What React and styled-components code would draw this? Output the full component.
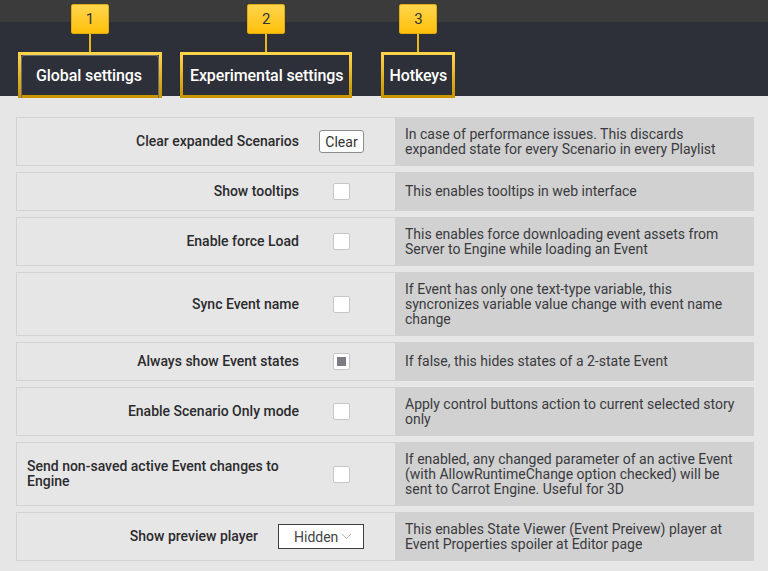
import React from "react";
import styled, { createGlobalStyle } from "styled-components";

const GlobalStyle = createGlobalStyle`
  html, body {
    margin: 0;
    padding: 0;
    background: #e6e6e6;
    font-family: Roboto, "Liberation Sans", Arial, sans-serif;
  }
`;

const TopStrip = styled.div`
  height: 22px;
  background: #3b3b3c;
`;

const Nav = styled.nav`
  height: 74px;
  background: #2e3039;
  display: flex;
  align-items: flex-end;
  padding-left: 18px;
`;

const Tab = styled.div`
  position: relative;
  box-sizing: border-box;
  height: 46px;
  margin-left: ${({ $gap }) => $gap || 0}px;
  margin-bottom: -2px;
  padding: 0 ${({ $pr }) => $pr}px 0 ${({ $pl }) => $pl}px;
  display: flex;
  align-items: center;
  border: 3px solid #e8b416;
  border-image: linear-gradient(#ffd44a, #c99600) 1;
  color: #ffffff;
  font-size: 16px;
  font-weight: 500;
  letter-spacing: -0.1px;
  white-space: nowrap;
`;

const ActiveFrame = styled.div`
  position: absolute;
  inset: 0 0 -3px 0;
  border: 1px solid #6c6e77;
  border-bottom: none;
  border-radius: 3px 3px 0 0;
`;

const Callout = styled.div`
  position: absolute;
  left: 50%;
  bottom: 100%;
  transform: translateX(-50%);
  display: flex;
  flex-direction: column;
  align-items: center;
  margin-bottom: 3px;
`;

const CalloutBox = styled.div`
  width: 38px;
  height: 30px;
  box-sizing: border-box;
  border-radius: 2px;
  background: linear-gradient(#ffd54d, #ffc00a);
  border: 1px solid #e2ac10;
  color: #333;
  font-size: 15px;
  font-weight: 400;
  display: flex;
  align-items: center;
  justify-content: center;
`;

const CalloutStem = styled.div`
  width: 2px;
  height: 18px;
  background: #e9b820;
`;

const Main = styled.main`
  padding: 21px 14px 10px 16px;
  display: flex;
  flex-direction: column;
  gap: 6px;
`;

const Row = styled.div`
  display: flex;
  min-height: 39px;
`;

const LeftCell = styled.div`
  flex: 1;
  display: flex;
  align-items: center;
  border: 1px solid #d3d3d3;
  border-right: none;
  background: #e6e6e6;
`;

const Label = styled.div`
  flex: 1;
  padding-left: 10px;
  text-align: ${({ $left }) => ($left ? "left" : "right")};
  font-size: 14px;
  font-weight: 500;
  line-height: 15px;
  color: #2b2b2e;
`;

const Control = styled.div`
  min-width: 45px;
  margin: 0 31px 0 20px;
  display: flex;
  justify-content: center;
  align-items: center;
`;

const Description = styled.div`
  width: 359px;
  box-sizing: border-box;
  padding: 9.5px 12px 9.5px 10px;
  display: flex;
  align-items: center;
  background: #d1d1d1;
  font-size: 14px;
  line-height: 15px;
  color: #3a3a3e;
`;

const Checkbox = styled.div`
  width: 17px;
  height: 17px;
  box-sizing: border-box;
  background: #fff;
  border: 1px solid #c6c6c6;
  border-radius: 2px;
  padding: 3px;
`;

const CheckMark = styled.div`
  width: 100%;
  height: 100%;
  background: #7c7c84;
`;

const Button = styled.button`
  width: 45px;
  height: 23px;
  box-sizing: border-box;
  background: #fff;
  border: 1px solid #8d8d8d;
  border-radius: 3px;
  font-family: inherit;
  font-size: 14px;
  color: #333;
  padding: 0;
`;

const Select = styled.div`
  width: 86px;
  height: 25px;
  box-sizing: border-box;
  border: 1px solid #3d3d42;
  background: #fff;
  display: flex;
  align-items: center;
  padding-left: 15px;
  gap: 3px;
  font-size: 14px;
  color: #444;
`;

const Chevron = () => (
  <svg width="11" height="7" viewBox="0 0 11 7">
    <path d="M1 1l4.5 4.5L10 1" fill="none" stroke="#b3b3b3" strokeWidth="1" />
  </svg>
);

const tabs = [
  { id: 1, title: "Global settings", pl: 15, pr: 17, gap: 0, active: true },
  { id: 2, title: "Experimental settings", pl: 7, pr: 6, gap: 18 },
  { id: 3, title: "Hotkeys", pl: 5, pr: 5, gap: 29 },
];

const settings = [
  {
    label: "Clear expanded Scenarios",
    control: <Button>Clear</Button>,
    text: "In case of performance issues. This discards expanded state for every Scenario in every Playlist",
  },
  { label: "Show tooltips", control: "box", text: "This enables tooltips in web interface" },
  {
    label: "Enable force Load",
    control: "box",
    text: "This enables force downloading event assets from Server to Engine while loading an Event",
  },
  {
    label: "Sync Event name",
    control: "box",
    text: "If Event has only one text-type variable, this syncronizes variable value change with event name change",
  },
  { label: "Always show Event states", control: "checked", text: "If false, this hides states of a 2-state Event" },
  {
    label: "Enable Scenario Only mode",
    control: "box",
    text: "Apply control buttons action to current selected story only",
  },
  {
    label: "Send non-saved active Event changes to Engine",
    left: true,
    control: "box",
    text: "If enabled, any changed parameter of an active Event (with AllowRuntimeChange option checked) will be sent to Carrot Engine. Useful for 3D",
  },
  {
    label: "Show preview player",
    control: (
      <Select>
        Hidden <Chevron />
      </Select>
    ),
    text: "This enables State Viewer (Event Preivew) player at Event Properties spoiler at Editor page",
  },
];

const renderControl = (control) => {
  if (control === "box") return <Checkbox />;
  if (control === "checked")
    return (
      <Checkbox>
        <CheckMark />
      </Checkbox>
    );
  return control;
};

const App = () => (
  <>
    <GlobalStyle />
    <TopStrip />
    <Nav>
      {tabs.map((tab) => (
        <Tab key={tab.id} $pl={tab.pl} $pr={tab.pr} $gap={tab.gap}>
          {tab.active && <ActiveFrame />}
          {tab.title}
          <Callout>
            <CalloutBox>{tab.id}</CalloutBox>
            <CalloutStem />
          </Callout>
        </Tab>
      ))}
    </Nav>
    <Main>
      {settings.map((s) => (
        <Row key={s.label}>
          <LeftCell>
            <Label $left={s.left}>{s.label}</Label>
            <Control>{renderControl(s.control)}</Control>
          </LeftCell>
          <Description>{s.text}</Description>
        </Row>
      ))}
    </Main>
  </>
);

export default App;
